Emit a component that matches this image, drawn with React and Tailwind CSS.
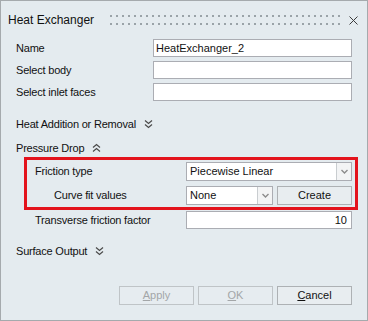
import React from 'react';

const font = { fontFamily: '"Liberation Sans", Arial, sans-serif' };

function DoubleChevron({ up = false }) {
  return (
    <svg width="9" height="10" viewBox="0 0 9 10" className={up ? 'rotate-180' : ''}>
      <path d="M1 1.5 L4.5 4.5 L8 1.5 M1 5.5 L4.5 8.5 L8 5.5" fill="none" stroke="#4a4a4a" strokeWidth="1.2" />
    </svg>
  );
}

function Arrow() {
  return (
    <svg width="7" height="5" viewBox="0 0 7 5">
      <path d="M0.5 1 L3.5 4 L6.5 1" fill="none" stroke="#8c8c8c" strokeWidth="1.4" />
    </svg>
  );
}

function Field({ value = '', right = false, className = '' }) {
  return (
    <div
      className={`h-[18px] border border-[#abadb3] bg-white flex items-center text-[11px] text-[#111] ${right ? 'justify-end pr-[4px]' : 'pl-[2px]'} ${className}`}
    >
      {value}
    </div>
  );
}

function Combo({ value, className = '' }) {
  return (
    <div className={`h-[19px] flex border border-[#abadb3] bg-white ${className}`}>
      <div className="flex-1 flex items-center pl-[3px] text-[11px] text-[#111]">{value}</div>
      <div className="w-[15px] flex items-center justify-center border-l border-[#c9cdd0] bg-[#f3f4f5]">
        <Arrow />
      </div>
    </div>
  );
}

function Btn({ children, disabled }) {
  return (
    <div
      className={`w-[75px] h-[19px] flex items-center justify-center text-[11px] border ${
        disabled ? 'border-[#bfc4c7] text-[#a3a6a8] bg-[#e6ecf0]' : 'border-[#adb1b4] text-[#111] bg-[#e8edf0]'
      }`}
    >
      {children}
    </div>
  );
}

function Row({ label, children }) {
  return (
    <div className="flex items-center h-[18px]">
      <div className="w-[137px] text-[11px] tracking-[-0.2px] text-[#111]">{label}</div>
      {children}
    </div>
  );
}

export default function App() {
  return (
    <div style={font} className="w-[368px] h-[321px] border border-[#a5aaad] bg-[#e4ebef] flex flex-col">
      {/* title */}
      <div className="h-[38px] flex items-center pl-[7px] pr-[9px] shrink-0">
        <span className="text-[12px] text-[#111]">Heat Exchanger</span>
        <svg width="234" height="10" className="ml-[16px]">
          <defs>
            <pattern id="grip" width="6" height="8" patternUnits="userSpaceOnUse">
              <rect x="0" y="0" width="2" height="2" fill="#9aa3a8" />
            </pattern>
          </defs>
          <rect x="0" y="0" width="234" height="10" fill="url(#grip)" />
        </svg>
        <svg width="9" height="9" viewBox="0 0 9 9" className="ml-auto">
          <path d="M0.5 0.5 L8.5 8.5 M8.5 0.5 L0.5 8.5" stroke="#3c3c3c" strokeWidth="1" />
        </svg>
      </div>

      <div className="pl-[15px] pr-[15px] flex flex-col">
        <div className="flex flex-col gap-[4px]">
          <Row label="Name">
            <Field value="HeatExchanger_2" className="w-[199px]" />
          </Row>
          <Row label="Select body">
            <Field className="w-[199px]" />
          </Row>
          <Row label="Select inlet faces">
            <Field className="w-[199px]" />
          </Row>
        </div>

        <div className="mt-[15px] h-[16px] flex items-center gap-[8px] text-[11px] tracking-[-0.2px] text-[#111]">
          <span>Heat Addition or Removal</span>
          <DoubleChevron />
        </div>
        <div className="mt-[8px] h-[16px] flex items-center gap-[8px] text-[11px] tracking-[-0.2px] text-[#111]">
          <span>Pressure Drop</span>
          <DoubleChevron up />
        </div>

        <div className="ml-[8px] mt-[1px] w-[334px] h-[53px] border-[3px] border-[#e3131c] pt-[2px] pl-[8px] pr-[3px] flex flex-col gap-[5px]">
          <div className="flex items-center h-[19px]">
            <div className="w-[151px] text-[11px] tracking-[-0.2px] text-[#111]">Friction type</div>
            <Combo value="Piecewise Linear" className="w-[166px]" />
          </div>
          <div className="flex items-center h-[19px]">
            <div className="w-[151px] pl-[19px] text-[11px] tracking-[-0.2px] text-[#111]">Curve fit values</div>
            <Combo value="None" className="w-[87px]" />
            <div className="ml-[4px] w-[75px] h-[19px] flex items-center justify-center text-[11px] border border-[#adb1b4] text-[#111] bg-[#e8edf0]">
              Create
            </div>
          </div>
        </div>

        <div className="mt-[2px] flex items-center h-[16px]">
          <div className="w-[170px] pl-[19px] text-[11px] tracking-[-0.2px] text-[#111]">Transverse friction factor</div>
          <Field value="10" right className="w-[166px] h-[16px]" />
        </div>

        <div className="mt-[15px] h-[16px] flex items-center gap-[8px] text-[11px] tracking-[-0.2px] text-[#111]">
          <span>Surface Output</span>
          <DoubleChevron />
        </div>

        <div className="mt-[27px] flex justify-end gap-[4px]">
          <Btn disabled>
            <span><u>A</u>pply</span>
          </Btn>
          <Btn disabled>
            <span><u>O</u>K</span>
          </Btn>
          <Btn>
            <span><u>C</u>ancel</span>
          </Btn>
        </div>
      </div>
    </div>
  );
}
